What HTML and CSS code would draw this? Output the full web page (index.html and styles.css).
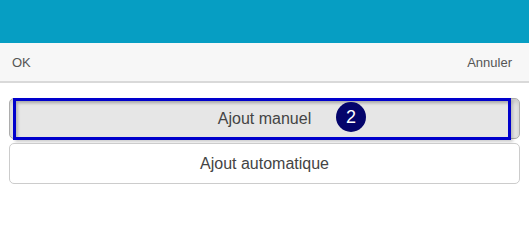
FILE: index.html
```html
<!DOCTYPE html>
<html lang="fr">
<head>
    <meta charset="UTF-8">
    <meta name="viewport" content="width=device-width, initial-scale=1.0">
    <title>Ajout</title>
    <link rel="stylesheet" href="styles.css">
</head>
<body>
    <div class="header"></div>
    <div class="toolbar">
        <span class="tool-btn">OK</span>
        <span class="tool-btn">Annuler</span>
    </div>
    <div class="content">
        <div class="choice active">
            Ajout manuel
            <div class="highlight"></div>
            <span class="badge">2</span>
        </div>
        <div class="choice">Ajout automatique</div>
    </div>
</body>
</html>
```

FILE: styles.css
```css
body {
    margin: 0;
    font-family: "Liberation Sans", Arial, sans-serif;
    background-color: white;
}

.header {
    height: 43px;
    background-color: #069ec3;
}

.toolbar {
    display: flex;
    justify-content: space-between;
    align-items: center;
    height: 38px;
    padding: 0 17px 0 12px;
    background-color: #f7f7f7;
    border-bottom: 2px solid #d9d9d9;
}

.tool-btn {
    font-size: 13px;
    color: #555;
}

.content {
    display: flex;
    flex-direction: column;
    gap: 4px;
    padding: 15px 9px;
}

.choice {
    position: relative;
    height: 39px;
    display: flex;
    align-items: center;
    justify-content: center;
    border: 1px solid #ccc;
    border-radius: 5px;
    background-color: white;
    font-size: 16px;
    color: #444;
}

.choice.active {
    background-color: #e6e6e6;
    border-color: #adadad;
    box-shadow: inset 0 3px 5px rgba(0,0,0,0.125);
}

.highlight {
    position: absolute;
    left: 3px;
    right: 8px;
    top: -1px;
    bottom: -2px;
    border: 3px solid #0000cc;
    box-shadow: inset 2px 2px 3px rgba(0,0,0,0.2), 2px 2px 3px rgba(0,0,0,0.2);
}

.badge {
    position: absolute;
    left: 326px;
    top: 3px;
    width: 30px;
    height: 30px;
    border-radius: 50%;
    background-color: #04046b;
    color: white;
    font-size: 18px;
    display: flex;
    align-items: center;
    justify-content: center;
}
```
